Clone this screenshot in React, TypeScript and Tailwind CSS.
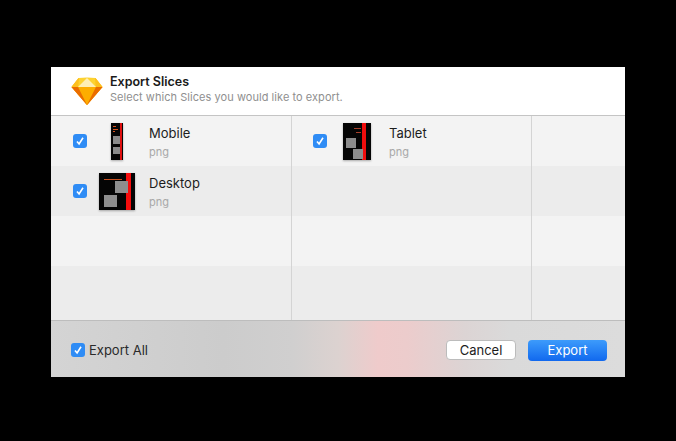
const font = "[font-family:'Inter',sans-serif]"

function SketchLogo() {
    return (
        <svg width="32" height="30" viewBox="0 0 32 30" className="shrink-0">
            <polygon points="7.5,2 24.5,2 31.5,11 16,29 0.5,11" fill="#fdb300" />
            <polygon points="0.5,11 31.5,11 16,29" fill="#f59a00" />
            <polygon points="7,11 25,11 16,29" fill="#fdad00" />
            <polygon points="7.5,2 16,1.5 24.5,2 25,11 7,11" fill="#fdd231" />
            <polygon points="16,2 25,11 7,11" fill="#feeeb5" />
            <polygon points="7.5,2 7,11 0.5,11" fill="#fdc01e" />
            <polygon points="24.5,2 25,11 31.5,11" fill="#fdc01e" />
            <polygon points="0.5,11 7,11 16,29" fill="#ea6c00" />
            <polygon points="31.5,11 25,11 16,29" fill="#ea6c00" />
        </svg>
    )
}

function CheckBox() {
    return (
        <span className="w-[14px] h-[14px] rounded-[3px] bg-[#2f8cf5] flex items-center justify-center shrink-0">
            <svg width="10" height="10" viewBox="0 0 10 10" fill="none">
                <path d="M2 5.4 L4.1 8 L8 1.8" stroke="#fff" strokeWidth="1.6" />
            </svg>
        </span>
    )
}

function MobileThumb() {
    return (
        <svg width="12" height="37" viewBox="0 0 12 37" className="shadow-[0_1px_2px_rgba(0,0,0,0.3)]">
            <rect width="12" height="37" fill="#050505" />
            <rect x="9" width="2" height="37" fill="#e01010" />
            <rect x="2" y="3" width="3" height="1" fill="#d9531e" />
            <rect x="2" y="6" width="5" height="1" fill="#d9531e" />
            <rect x="2" y="8" width="2" height="1" fill="#d9531e" />
            <rect x="2" y="13" width="7" height="8" fill="#8a8a8a" />
            <rect x="2" y="24" width="7" height="7" fill="#8a8a8a" />
        </svg>
    )
}

function TabletThumb() {
    return (
        <svg width="28" height="37" viewBox="0 0 28 37" className="shadow-[0_1px_2px_rgba(0,0,0,0.3)]">
            <rect width="28" height="37" fill="#050505" />
            <rect x="19" width="4" height="37" fill="#f00d0d" />
            <rect x="11" y="5" width="7" height="1" fill="#a8402a" />
            <rect x="13" y="9" width="5" height="1" fill="#a8402a" />
            <rect x="3" y="15" width="10" height="10" fill="#8c8c8c" />
            <rect x="10" y="26" width="10" height="10" fill="#8c8c8c" />
        </svg>
    )
}

function DesktopThumb() {
    return (
        <svg width="36" height="37" viewBox="0 0 36 37" className="shadow-[0_1px_2px_rgba(0,0,0,0.3)]">
            <rect width="36" height="37" fill="#050505" />
            <rect x="27" width="5" height="37" fill="#f50c0c" />
            <rect x="5" y="6" width="18" height="1" fill="#c9501f" />
            <rect x="16" y="8" width="13" height="12" fill="#8e8e8e" />
            <rect x="5" y="22" width="13" height="12" fill="#8e8e8e" />
        </svg>
    )
}

function SliceCell({ name, thumb, tone }: { name: string; thumb: React.ReactNode; tone: string }) {
    return (
        <div className={`flex items-center h-[50px] border-r border-[#d4d4d4] ${tone}`}>
            <div className="w-[45px] flex pl-[21px]">
                <CheckBox />
            </div>
            <div className="w-[40px] flex justify-center">{thumb}</div>
            <div className="ml-[12px] flex flex-col">
                <span className="text-[13px] leading-[18px] text-[#1c1c1c]">{name}</span>
                <span className="text-[11px] leading-[14px] mt-[3px] text-[#a8a8a8]">png</span>
            </div>
        </div>
    )
}

export default function App() {
    return (
        <div className={`w-[676px] h-[441px] bg-black pt-[67px] pl-[51px] overflow-hidden ${font}`}>
            <div className="w-[574px] h-[310px] flex flex-col">
                {/* Header */}
                <div className="h-[49px] bg-white border-b border-[#c4c4c4] flex items-center pl-[20px] gap-[7px] shrink-0">
                    <SketchLogo />
                    <div className="flex flex-col -mt-[4px]">
                        <span className="text-[12.5px] leading-[15px] font-semibold text-[#1a1a1a]">Export Slices</span>
                        <span className="text-[11px] leading-[15px] mt-[1px] tracking-[0.05px] text-[#8f8f8f]">Select which Slices you would like to export.</span>
                    </div>
                </div>

                {/* Slices */}
                <div className="grid grid-cols-[241px_240px_93px] shrink-0">
                    <SliceCell name="Mobile" thumb={<MobileThumb />} tone="bg-[#f3f3f3] pl-[1px]" />
                    <SliceCell name="Tablet" thumb={<TabletThumb />} tone="bg-[#f3f3f3]" />
                    <div className="bg-[#f3f3f3]" />
                    <SliceCell name="Desktop" thumb={<DesktopThumb />} tone="bg-[#ececec] pl-[1px]" />
                    <div className="bg-[#ececec] border-r border-[#d4d4d4]" />
                    <div className="bg-[#ececec]" />
                    <div className="h-[50px] bg-[#f3f3f3] border-r border-[#d4d4d4]" />
                    <div className="bg-[#f3f3f3] border-r border-[#d4d4d4]" />
                    <div className="bg-[#f3f3f3]" />
                    <div className="h-[54px] bg-[#ececec] border-r border-[#d4d4d4]" />
                    <div className="bg-[#ececec] border-r border-[#d4d4d4]" />
                    <div className="bg-[#ececec]" />
                </div>

                {/* Footer */}
                <div className="flex-1 border-t border-[#bdbdbd] flex items-center justify-between pl-[20px] pr-[18px] pt-[2px] bg-[linear-gradient(90deg,#d4d4d4_0%,#cccccc_30%,#d0cfcf_42%,#dcd2d0_50%,#efcbcb_57%,#eccccc_62%,#dcd4d4_72%,#dadada_80%,#dcdcdc_100%)]">
                    <div className="flex items-center gap-[4px]">
                        <CheckBox />
                        <span className="text-[13px] pt-[1px] text-[#2a2a2a]">Export All</span>
                    </div>
                    <div className="flex items-center gap-[12px]">
                        <button className="w-[70px] h-[20px] rounded-[4px] bg-white border border-[#bcbcbc] text-[13px] leading-none text-[#1c1c1c]">Cancel</button>
                        <button className="w-[79px] h-[21px] rounded-[4px] bg-gradient-to-b from-[#3d9bfb] to-[#1168ee] text-[13px] leading-none text-white">Export</button>
                    </div>
                </div>
            </div>
        </div>
    )
}
